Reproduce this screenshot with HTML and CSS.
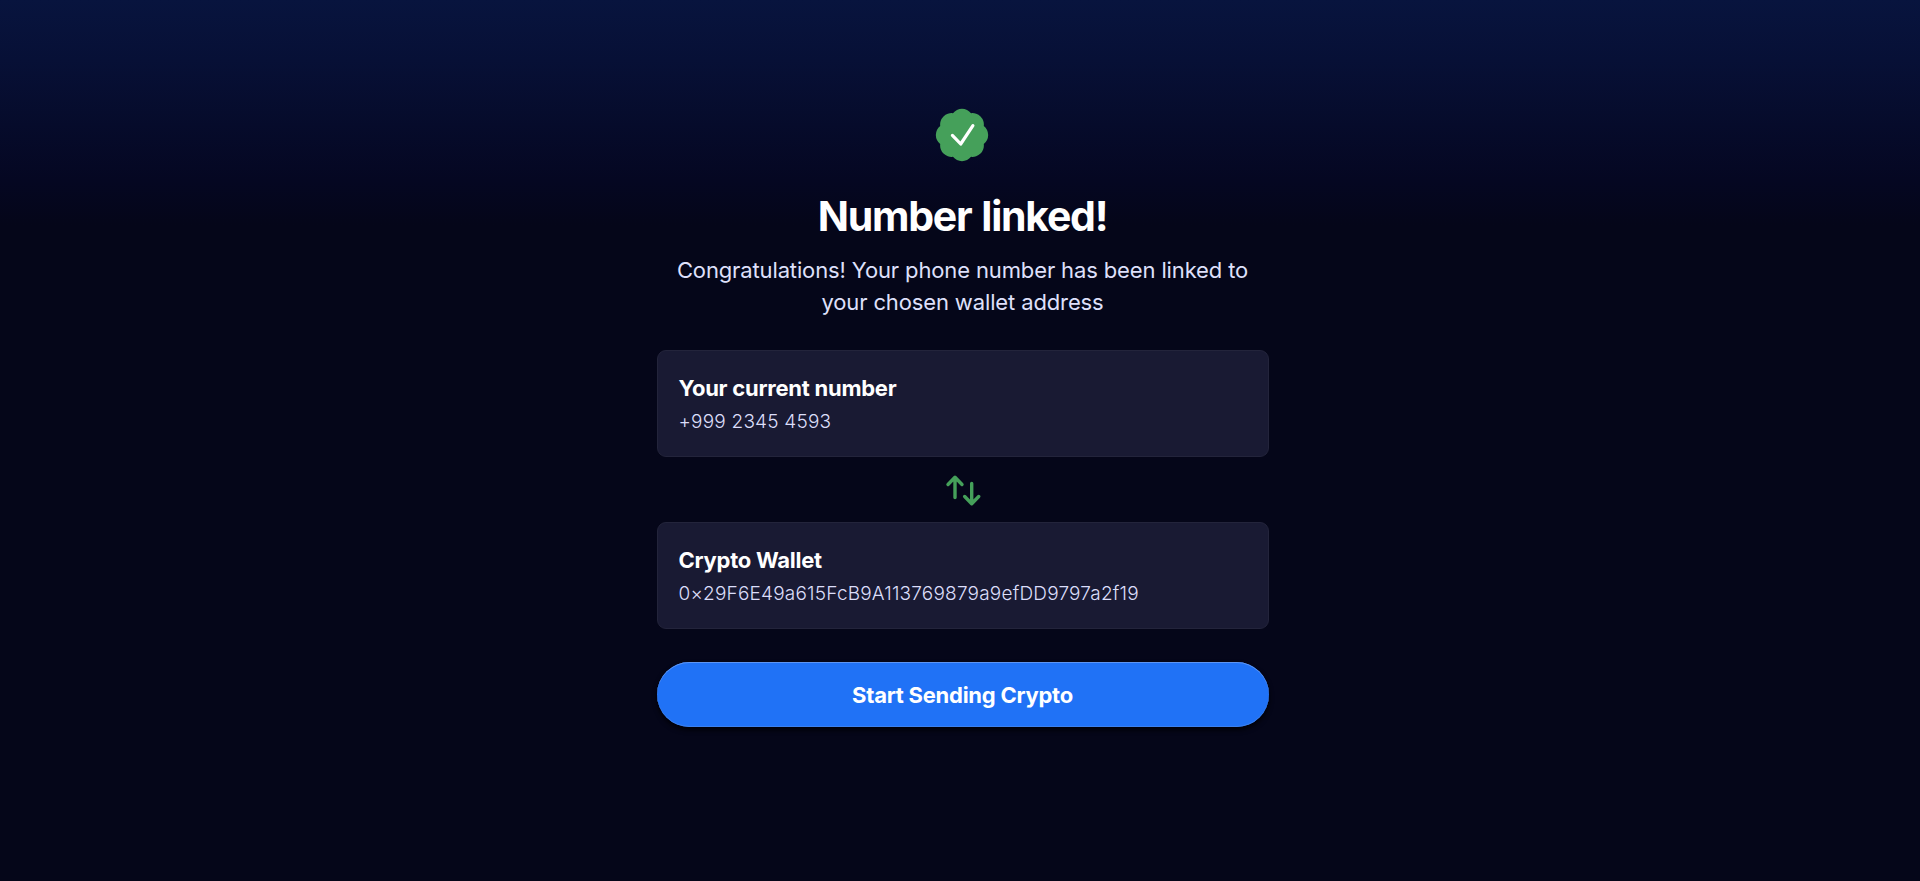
FILE: index.html
```html
<!DOCTYPE html>
<html lang="en">
<head>
  <meta charset="UTF-8" />
  <meta name="viewport" content="width=device-width, initial-scale=1.0"/>
  <title>Number linked!</title>
  <link rel="stylesheet" href="styles.css">
</head>
<body>
  <main class="page">
    <section class="success">
      <svg class="badge" viewBox="-27 -27 54 54" aria-hidden="true">
        <path class="badge-shape" d="M-9.03 -21.8A11.5 11.5 0 0 1 9.03 -21.8A11.5 11.5 0 0 1 21.8 -9.03A11.5 11.5 0 0 1 21.8 9.03A11.5 11.5 0 0 1 9.03 21.8A11.5 11.5 0 0 1 -9.03 21.8A11.5 11.5 0 0 1 -21.8 9.03A11.5 11.5 0 0 1 -21.8 -9.03A11.5 11.5 0 0 1 -9.03 -21.8Z"/>
        <path class="badge-check" d="M-9.6 0.4L-1.3 9L10.9 -9.4"/>
      </svg>

      <h1 class="title">Number linked!</h1>
      <p class="text">Congratulations! Your phone number has been linked to<br>your chosen wallet address</p>

      <div class="card">
        <h2>Your current number</h2>
        <p>+999 2345 4593</p>
      </div>

      <svg class="swap" viewBox="0 0 36 32" aria-hidden="true">
        <path d="M10 23.5V3.5M3 10.5L10 3.3L17 10.5"/>
        <path d="M26.7 9.5V29.5M19.7 22.5L26.7 29.7L33.7 22.5"/>
      </svg>

      <div class="card">
        <h2>Crypto Wallet</h2>
        <p>0×29F6E49a615FcB9A113769879a9efDD9797a2f19</p>
      </div>

      <button class="btn">Start Sending Crypto</button>
    </section>
  </main>
</body>
</html>
```

FILE: styles.css
```css
* {
  margin: 0;
  padding: 0;
  box-sizing: border-box;
}

body {
  background: #050619;
  font-family: "Inter", sans-serif;
  color: #fff;
}

.page {
  min-height: 100vh;
  padding: 108px 0 0 5px;
  background: linear-gradient(180deg, #08143e 0, #071036 60px, #060b2b 125px, #050722 180px, #050619 225px);
}

.success {
  width: 612px;
  margin: 0 auto;
  display: flex;
  flex-direction: column;
  align-items: center;
}

.badge {
  width: 54px;
  height: 54px;
  margin-right: 2px;
}

.badge-shape {
  fill: #45a05a;
}

.badge-check {
  fill: none;
  stroke: #fff;
  stroke-width: 3.2;
  stroke-linecap: round;
  stroke-linejoin: round;
}

.title {
  margin-top: 30px;
  font-size: 41px;
  line-height: 48px;
  font-weight: 700;
  letter-spacing: -1.25px;
  word-spacing: 1.5px;
}

.text {
  margin-top: 14px;
  font-size: 22px;
  line-height: 32px;
  letter-spacing: -0.13px;
  color: #dfe0fb;
  text-align: center;
}

.card {
  width: 100%;
  height: 107px;
  padding: 21px;
  background: #191a33;
  border: 1px solid #23243b;
  border-radius: 9px;
}

.text + .card {
  margin-top: 32px;
}

.card h2 {
  font-size: 22px;
  line-height: 32px;
  font-weight: 700;
  letter-spacing: -0.25px;
}

.card p {
  margin-top: 2px;
  font-size: 19px;
  line-height: 32px;
  font-weight: 300;
  letter-spacing: 0.2px;
  color: #dcdefa;
}

.swap {
  width: 36px;
  height: 32px;
  margin: 17px 0 16px;
  fill: none;
  stroke: #45a05a;
  stroke-width: 3.4;
  stroke-linecap: round;
  stroke-linejoin: round;
}

.btn {
  width: 100%;
  height: 65px;
  margin-top: 33px;
  border: 0;
  border-radius: 33px;
  background: #2072f6;
  box-shadow: inset 0 1px 0 #5d96f5, inset 0 -1px 0 #3c80ee, 0 3px 5px #010107;
  font-family: inherit;
  font-size: 22px;
  font-weight: 700;
  letter-spacing: -0.25px;
  color: #fff;
  cursor: pointer;
}
```
